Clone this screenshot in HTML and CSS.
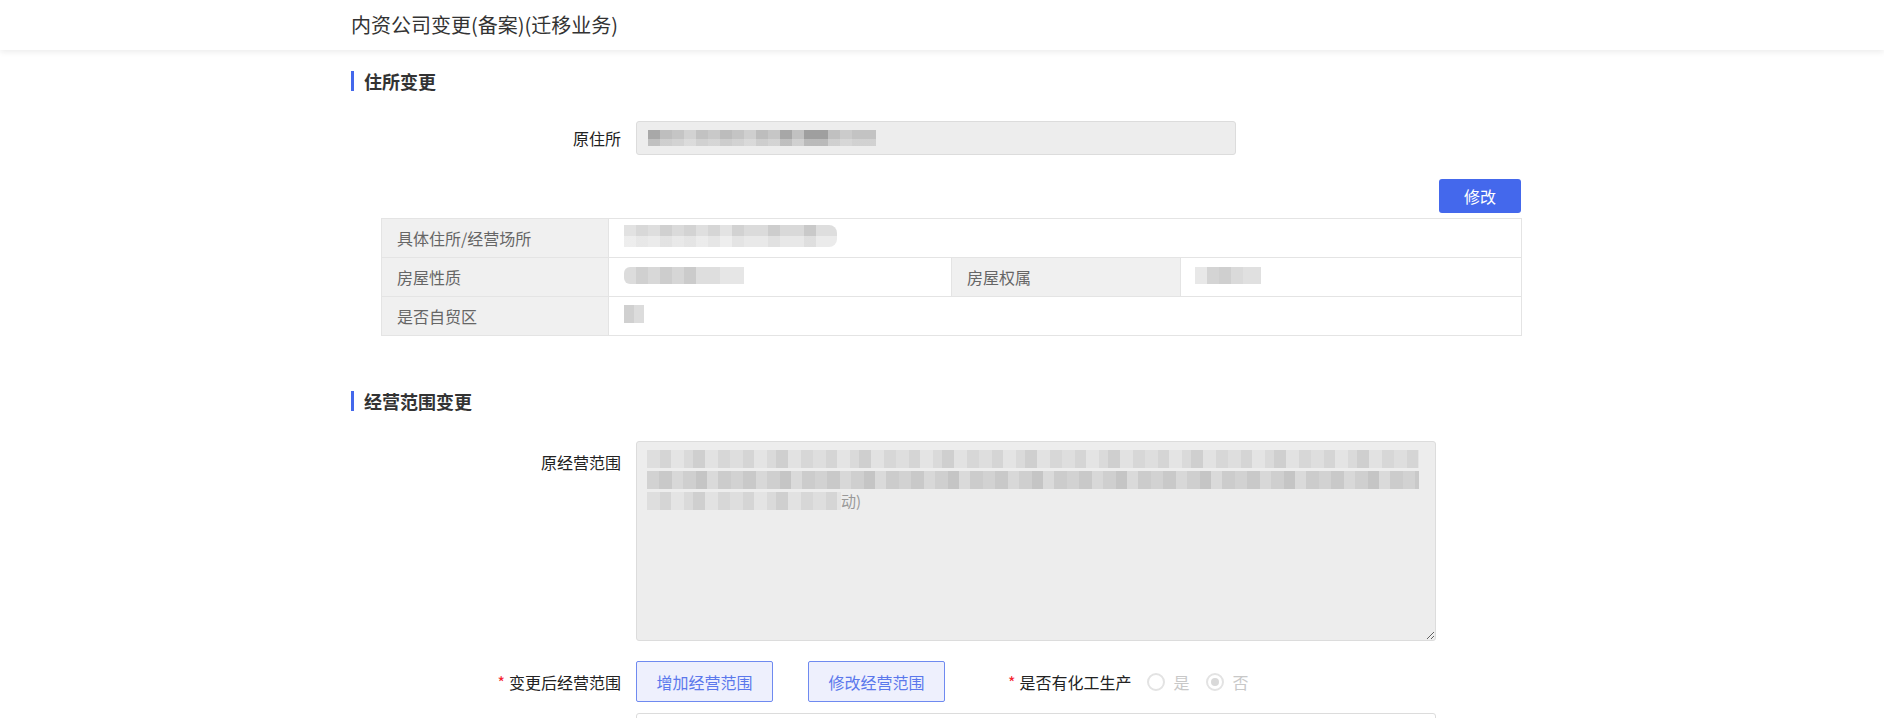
FILE: index.html
```html
<!DOCTYPE html>
<html lang="zh-CN">
<head>
    <meta charset="UTF-8">
    <meta name="viewport" content="width=device-width, initial-scale=1.0">
    <title>内资公司变更(备案)(迁移业务)</title>
    <link rel="stylesheet" href="styles.css">
</head>
<body>
    <header class="topbar">
        <div class="topbar-title">内资公司变更(备案)(迁移业务)</div>
    </header>

    <main class="page">
        <!-- 住所变更 -->
        <section class="block">
            <h3 class="block-title">住所变更</h3>
            <div class="form-row">
                <label class="form-label">原住所</label>
                <div class="input is-disabled">
                    <span class="mosaic mosaic-addr"></span>
                </div>
            </div>
            <div class="toolbar">
                <button type="button" class="btn-primary">修改</button>
            </div>
            <table class="info-table">
                <colgroup>
                    <col style="width: 227px">
                    <col style="width: 343px">
                    <col style="width: 229px">
                    <col style="width: 341px">
                </colgroup>
                <tr>
                    <td class="cell-label">具体住所/经营场所</td>
                    <td colspan="3"><span class="mosaic mosaic-place"></span></td>
                </tr>
                <tr>
                    <td class="cell-label">房屋性质</td>
                    <td><span class="mosaic mosaic-nature"></span></td>
                    <td class="cell-label">房屋权属</td>
                    <td><span class="mosaic mosaic-owner"></span></td>
                </tr>
                <tr>
                    <td class="cell-label">是否自贸区</td>
                    <td colspan="3"><span class="mosaic mosaic-tiny"></span></td>
                </tr>
            </table>
        </section>

        <!-- 经营范围变更 -->
        <section class="block">
            <h3 class="block-title">经营范围变更</h3>
            <div class="form-row form-row-top">
                <label class="form-label">原经营范围</label>
                <div class="textarea is-disabled">
                    <div class="text-line"><span class="mosaic mosaic-soft" style="width: 772px"></span></div>
                    <div class="text-line"><span class="mosaic mosaic-mid" style="width: 772px"></span></div>
                    <div class="text-line"><span class="mosaic mosaic-soft" style="width: 194px"></span>动)</div>
                </div>
            </div>
            <div class="form-row form-row-btns">
                <label class="form-label"><span class="required">*</span>变更后经营范围</label>
                <div class="btn-group">
                    <button type="button" class="btn-plain">增加经营范围</button>
                    <button type="button" class="btn-plain">修改经营范围</button>
                </div>
                <div class="field-inline">
                    <span class="required">*</span>是否有化工生产
                    <div class="radio-group">
                        <label class="radio"><span class="radio-dot"></span>是</label>
                        <label class="radio is-checked"><span class="radio-dot"></span>否</label>
                    </div>
                </div>
            </div>
            <div class="form-row form-row-tight">
                <div class="form-label"></div>
                <div class="box"></div>
            </div>
        </section>
    </main>
</body>
</html>
```

FILE: styles.css
```css
* {
    box-sizing: border-box;
}
html, body {
    margin: 0;
    padding: 0;
    overflow: hidden;
}
body {
    font-family: "Noto Sans CJK SC", "Microsoft YaHei", sans-serif;
    font-size: 16px;
    color: #333;
    background: #fff;
}
.topbar {
    height: 50px;
    background: #fff;
    box-shadow: 0 2px 6px rgba(0, 0, 0, 0.08);
}
.topbar-title {
    width: 1182px;
    margin: 0 auto;
    line-height: 50px;
    font-size: 20px;
    color: #333;
}
.page {
    width: 1182px;
    margin: 0 auto;
    padding-top: 21px;
}
.block + .block {
    margin-top: 55px;
}
.block-title {
    margin: 0;
    font-size: 18px;
    font-weight: bold;
    line-height: 20px;
    color: #333;
    border-left: 3px solid #4468ec;
    padding-left: 10px;
}
.form-row {
    display: flex;
    align-items: center;
    margin-top: 30px;
}
.form-row-top {
    align-items: flex-start;
}
.form-row-top .form-label {
    padding-top: 10px;
}
.form-row-btns {
    margin-top: 20px;
}
.form-row-tight {
    margin-top: 11px;
}
.form-label {
    width: 285px;
    flex-shrink: 0;
    padding-right: 15px;
    text-align: right;
    line-height: 22px;
    color: #222;
}
.required {
    color: #f5222d;
    margin-right: 4px;
}
.input {
    width: 600px;
    height: 34px;
    border: 1px solid #dcdcdc;
    border-radius: 3px;
    display: flex;
    align-items: center;
    padding: 0 11px;
}
.is-disabled {
    background: #ededed;
}
.toolbar {
    width: 1170px;
    display: flex;
    justify-content: flex-end;
    margin-top: 24px;
}
.btn-primary {
    width: 82px;
    height: 34px;
    border: none;
    border-radius: 3px;
    background: #4468ec;
    color: #fff;
    font-family: inherit;
    font-size: 16px;
    cursor: pointer;
}
.info-table {
    margin: 5px 0 0 30px;
    width: 1140px;
    border-collapse: collapse;
    table-layout: fixed;
}
.info-table td {
    height: 39px;
    padding: 0 15px;
    border: 1px solid #e4e4e4;
    font-size: 16px;
    vertical-align: middle;
}
.info-table .cell-label {
    background: #f0f0f0;
    color: #666;
}
.textarea {
    width: 800px;
    height: 200px;
    border: 1px solid #dcdcdc;
    border-radius: 3px;
    padding: 6px 10px;
    line-height: 21px;
    font-size: 15px;
    color: #999;
    resize: both;
    overflow: auto;
}
.text-line {
    display: flex;
    align-items: center;
    height: 21px;
}
.btn-group {
    display: flex;
    gap: 35px;
}
.btn-plain {
    width: 137px;
    height: 41px;
    border: 1px solid #6f8af0;
    border-radius: 2px;
    background: #eef0fd;
    color: #5b78ec;
    font-family: inherit;
    font-size: 16px;
    cursor: pointer;
}
.field-inline {
    display: flex;
    align-items: center;
    margin-left: 63px;
    color: #222;
}
.radio-group {
    display: flex;
    align-items: center;
    margin-left: 15px;
}
.radio {
    display: inline-flex;
    align-items: center;
    color: #c8c8c8;
    margin-right: 16px;
}
.radio-dot {
    width: 18px;
    height: 18px;
    border: 2px solid #e3e3e3;
    border-radius: 50%;
    margin-right: 9px;
    display: inline-flex;
    align-items: center;
    justify-content: center;
}
.is-checked .radio-dot::after {
    content: "";
    width: 8px;
    height: 8px;
    border-radius: 50%;
    background: #d9d9d9;
}
.box {
    width: 800px;
    height: 60px;
    border: 1px solid #dcdcdc;
    border-radius: 3px;
}

/* blurred (masked) values */
.mosaic {
    display: inline-block;
    height: 16px;
    filter: blur(0.6px);
}
.mosaic-addr {
    width: 228px;
    background:
        linear-gradient(180deg, transparent 55%, rgba(237, 237, 237, 0.35) 55%),
        linear-gradient(90deg, #a8a8a8 0 12px, #bebebe 12px 24px, #c5c5c5 24px 36px, #d2d2d2 36px 48px, #c2c2c2 48px 60px, #c9c9c9 60px 72px, #bcbcbc 72px 84px, #c4c4c4 84px 96px, #cfcfcf 96px 108px, #bdbdbd 108px 120px, #c6c6c6 120px 132px, #a7a7a7 132px 144px, #c1c1c1 144px 156px, #9f9f9f 156px 180px, #c0c0c0 180px 192px, #cbcbcb 192px 204px, #c3c3c3 204px 228px);
}
.mosaic-place {
    width: 213px;
    height: 22px;
    border-radius: 0 8px 8px 0;
    background:
        linear-gradient(180deg, transparent 50%, rgba(255, 255, 255, 0.4) 50%),
        linear-gradient(90deg, #e2e2e2 0 12px, #d8d8d8 12px 24px, #dedede 24px 36px, #d0d0d0 36px 48px, #dadada 48px 60px, #d3d3d3 60px 72px, #dfdfdf 72px 84px, #d6d6d6 84px 96px, #e3e3e3 96px 108px, #d2d2d2 108px 120px, #dbdbdb 120px 144px, #cdcdcd 144px 156px, #d9d9d9 156px 180px, #c9c9c9 180px 192px, #dedede 192px 213px);
}
.mosaic-nature {
    width: 120px;
    height: 17px;
    border-radius: 6px 0 0 6px;
    background: linear-gradient(90deg, #dcdcdc 0 12px, #d0d0d0 12px 24px, #d8d8d8 24px 36px, #cdcdcd 36px 48px, #d6d6d6 48px 60px, #cbcbcb 60px 72px, #dedede 72px 96px, #e6e6e6 96px 120px);
}
.mosaic-owner {
    width: 66px;
    height: 17px;
    margin-left: -1px;
    background: linear-gradient(90deg, #e8e8e8 0 12px, #d4d4d4 12px 24px, #cfcfcf 24px 36px, #dadada 36px 48px, #e0e0e0 48px 66px);
}
.mosaic-tiny {
    width: 20px;
    height: 18px;
    background: linear-gradient(90deg, #d0d0d0 0 10px, #dcdcdc 10px 20px);
}
.mosaic-soft {
    height: 18px;
    background: repeating-linear-gradient(90deg, #dedede 0 13px, #d5d5d5 13px 24px, #e4e4e4 24px 37px, #dadada 37px 46px, #cfcfcf 46px 58px, #e2e2e2 58px 71px, #d7d7d7 71px 83px);
}
.mosaic-mid {
    height: 18px;
    background: repeating-linear-gradient(90deg, #d2d2d2 0 12px, #c9c9c9 12px 25px, #d8d8d8 25px 36px, #cfcfcf 36px 49px, #c5c5c5 49px 60px, #dadada 60px 71px, #cccccc 71px 84px);
}
```
